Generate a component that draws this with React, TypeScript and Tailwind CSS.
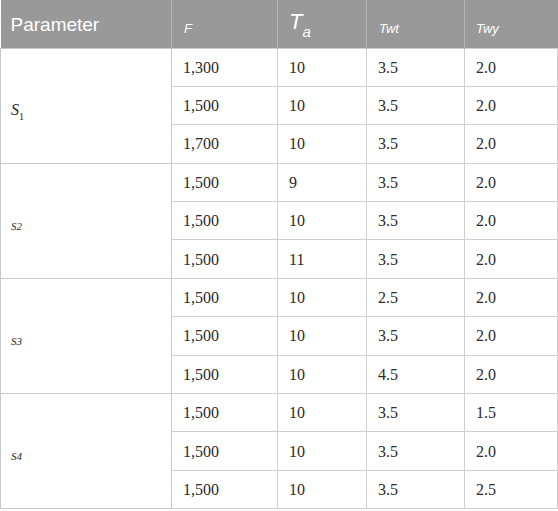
const groups = [
  {
    label: (
      <span className="italic text-[16px]">
        S<sub className="not-italic text-[10px] align-[-3px]">1</sub>
      </span>
    ),
    rows: [
      ["1,300", "10", "3.5", "2.0"],
      ["1,500", "10", "3.5", "2.0"],
      ["1,700", "10", "3.5", "2.0"],
    ],
  },
  {
    label: <span className="italic text-[11px]">S2</span>,
    rows: [
      ["1,500", "9", "3.5", "2.0"],
      ["1,500", "10", "3.5", "2.0"],
      ["1,500", "11", "3.5", "2.0"],
    ],
  },
  {
    label: <span className="italic text-[11px]">S3</span>,
    rows: [
      ["1,500", "10", "2.5", "2.0"],
      ["1,500", "10", "3.5", "2.0"],
      ["1,500", "10", "4.5", "2.0"],
    ],
  },
  {
    label: <span className="italic text-[11px]">S4</span>,
    rows: [
      ["1,500", "10", "3.5", "1.5"],
      ["1,500", "10", "3.5", "2.0"],
      ["1,500", "10", "3.5", "2.5"],
    ],
  },
];

export default function App() {
  return (
    <div className="w-[558px] h-[511px] bg-white overflow-hidden">
      <table className="w-[557px] border-collapse table-fixed text-[#2a2a2a]">
        <colgroup>
          <col className="w-[171px]" />
          <col className="w-[106px]" />
          <col className="w-[89px]" />
          <col className="w-[98px]" />
          <col className="w-[93px]" />
        </colgroup>
        <thead>
          <tr className="h-[48px] bg-[#999999] text-white font-['Liberation_Sans',sans-serif]">
            <th className="pl-[10px] text-left font-normal text-[19px] border-r border-[#b5b5b5] align-top pt-[11px]">
              Parameter
            </th>
            <th className="pl-[12px] text-left font-normal italic text-[13px] border-r border-[#b5b5b5] align-bottom pb-[9px]">
              F
            </th>
            <th className="pl-[11px] text-left font-normal italic text-[22px] border-r border-[#b5b5b5] align-top pt-[5px]">
              T<sub className="italic text-[15px] align-[-4px]">a</sub>
            </th>
            <th className="pl-[12px] text-left font-normal italic text-[13px] border-r border-[#b5b5b5] align-bottom pb-[9px]">
              Twt
            </th>
            <th className="pl-[11px] text-left font-normal italic text-[13px] align-bottom pb-[9px]">
              Twy
            </th>
          </tr>
        </thead>
        <tbody className="font-['Liberation_Serif',serif] text-[16px]">
          {groups.map((g, gi) =>
            g.rows.map((r, ri) => (
              <tr key={`${gi}-${ri}`} className="h-[38.4px]">
                {ri === 0 && (
                  <td
                    rowSpan={3}
                    className="pl-[10px] border border-[#c8c8c8] align-middle pt-[8px]"
                  >
                    {g.label}
                  </td>
                )}
                {r.map((v, ci) => (
                  <td
                    key={ci}
                    className="px-[11px] border border-[#d0d0d0] align-middle pt-[1px]"
                  >
                    {v}
                  </td>
                ))}
              </tr>
            ))
          )}
        </tbody>
      </table>
    </div>
  );
}
